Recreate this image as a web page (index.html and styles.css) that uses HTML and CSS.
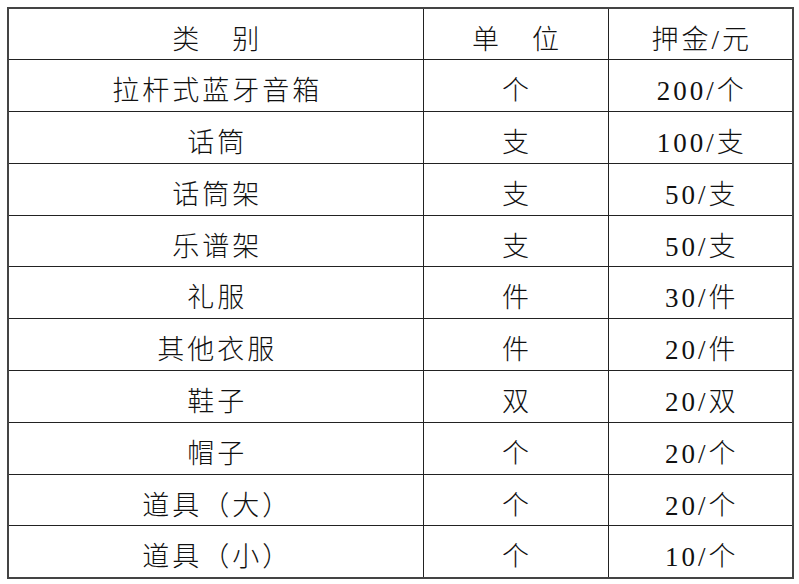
FILE: index.html
```html
<!DOCTYPE html>
<html lang="zh-CN">
<head>
<meta charset="utf-8">
<title>押金表</title>
<link rel="stylesheet" href="styles.css">
</head>
<body>
<table class="deposit">
  <colgroup>
    <col class="c-name">
    <col class="c-unit">
    <col class="c-price">
  </colgroup>
  <tr><td>类　别</td><td>单　位</td><td>押金/元</td></tr>
  <tr><td>拉杆式蓝牙音箱</td><td>个</td><td>200/个</td></tr>
  <tr><td>话筒</td><td>支</td><td>100/支</td></tr>
  <tr><td>话筒架</td><td>支</td><td>50/支</td></tr>
  <tr><td>乐谱架</td><td>支</td><td>50/支</td></tr>
  <tr><td>礼服</td><td>件</td><td>30/件</td></tr>
  <tr><td>其他衣服</td><td>件</td><td>20/件</td></tr>
  <tr><td>鞋子</td><td>双</td><td>20/双</td></tr>
  <tr><td>帽子</td><td>个</td><td>20/个</td></tr>
  <tr><td>道具（大）</td><td>个</td><td>20/个</td></tr>
  <tr><td>道具（小）</td><td>个</td><td>10/个</td></tr>
</table>
</body>
</html>
```

FILE: styles.css
```css
html, body {
  margin: 0;
  padding: 0;
  background: #ffffff;
}

body {
  padding: 7px;
  font-family: "Liberation Serif", "Noto Sans CJK SC", serif;
  color: #111111;
}

.deposit {
  border-collapse: collapse;
  table-layout: fixed;
  width: 785px;
  height: 570px;
  border: 2px solid #444444;
}

.c-name { width: 415px; }
.c-unit { width: 185px; }
.c-price { width: 185px; }

.deposit tr {
  height: 51.8px;
}

.deposit td {
  border: 1px solid #222222;
  padding: 12px 0 0 0;
  text-align: center;
  vertical-align: middle;
  font-size: 27px;
  font-weight: 300;
  line-height: 1;
  letter-spacing: 3px;
  text-indent: 3px;
  white-space: nowrap;
}
```
